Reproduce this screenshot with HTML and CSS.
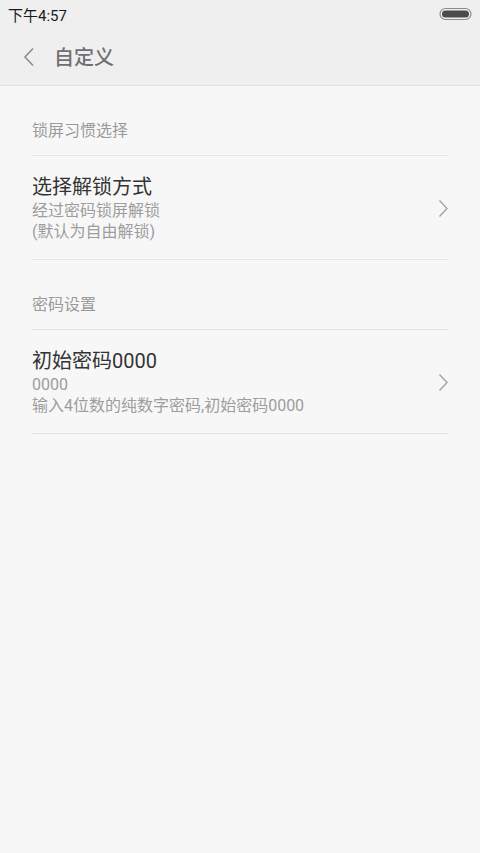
FILE: index.html
```html
<!DOCTYPE html>
<html lang="zh-CN">
<head>
  <meta charset="UTF-8" />
  <meta name="viewport" content="width=device-width, initial-scale=1.0"/>
  <title>自定义</title>
  <link rel="stylesheet" href="styles.css">
</head>
<body>

  <div class="status-bar">
    <span class="time">下午4:57</span>
    <svg class="battery" width="34" height="14" viewBox="0 0 34 14">
      <rect x="1" y="1.5" width="31" height="11" rx="5.5" fill="none" stroke="#8a8a8a" stroke-width="1.2"/>
      <rect x="3" y="3.5" width="27" height="7" rx="3.5" fill="#4a4a4a"/>
    </svg>
  </div>

  <header class="action-bar">
    <svg class="back" width="12" height="20" viewBox="0 0 12 20">
      <polyline points="10,1.5 2,10 10,18.5" fill="none" stroke="#8c8c8c" stroke-width="1.6"/>
    </svg>
    <h1>自定义</h1>
  </header>

  <section class="pref-list">
    <div class="category">锁屏习惯选择</div>
    <div class="pref">
      <div class="pref-text">
        <div class="pref-title">选择解锁方式</div>
        <div class="pref-summary">经过密码锁屏解锁</div>
        <div class="pref-summary">(默认为自由解锁)</div>
      </div>
      <svg class="arrow" width="11" height="19" viewBox="0 0 11 19">
        <polyline points="1.5,1.5 9,9.5 1.5,17.5" fill="none" stroke="#a3a3a3" stroke-width="1.4"/>
      </svg>
    </div>

    <div class="category">密码设置</div>
    <div class="pref">
      <div class="pref-text">
        <div class="pref-title">初始密码0000</div>
        <div class="pref-summary">0000</div>
        <div class="pref-summary">输入4位数的纯数字密码,初始密码0000</div>
      </div>
      <svg class="arrow" width="11" height="19" viewBox="0 0 11 19">
        <polyline points="1.5,1.5 9,9.5 1.5,17.5" fill="none" stroke="#a3a3a3" stroke-width="1.4"/>
      </svg>
    </div>
  </section>

</body>
</html>
```

FILE: styles.css
```css
body {
  margin: 0;
  padding: 0;
  min-height: 853px;
  background-color: #f7f7f7;
  font-family: Roboto, "Noto Sans CJK SC", sans-serif;
}

.status-bar {
  height: 28px;
  background-color: #efefef;
  display: flex;
  align-items: center;
  justify-content: space-between;
  padding: 0 7px 0 8px;
}

.status-bar .time {
  font-size: 15px;
  color: #1a1a1a;
}

.action-bar {
  height: 57px;
  background-color: #efefef;
  border-bottom: 1px solid #e1e1e1;
  display: flex;
  align-items: center;
  padding-left: 23px;
}

.action-bar .back {
  margin-top: 1px;
}

.action-bar h1 {
  margin: 0 0 0 19px;
  font-size: 20px;
  font-weight: 500;
  color: #6f6f6f;
}

.pref-list {
  margin: 0 32px;
}

.category {
  padding: 34px 0 13px;
  line-height: 22px;
  font-size: 16px;
  color: #9a9a9a;
  border-bottom: 1px solid #e4e4e4;
}

.pref {
  display: flex;
  align-items: center;
  justify-content: space-between;
  padding: 18px 0 17px;
  border-bottom: 1px solid #e4e4e4;
}

.pref-title {
  font-size: 20px;
  line-height: 26px;
  color: #333;
}

.pref-summary {
  font-size: 16px;
  line-height: 21px;
  color: #9d9d9d;
}

.arrow {
  margin-right: -1px;
}
```
